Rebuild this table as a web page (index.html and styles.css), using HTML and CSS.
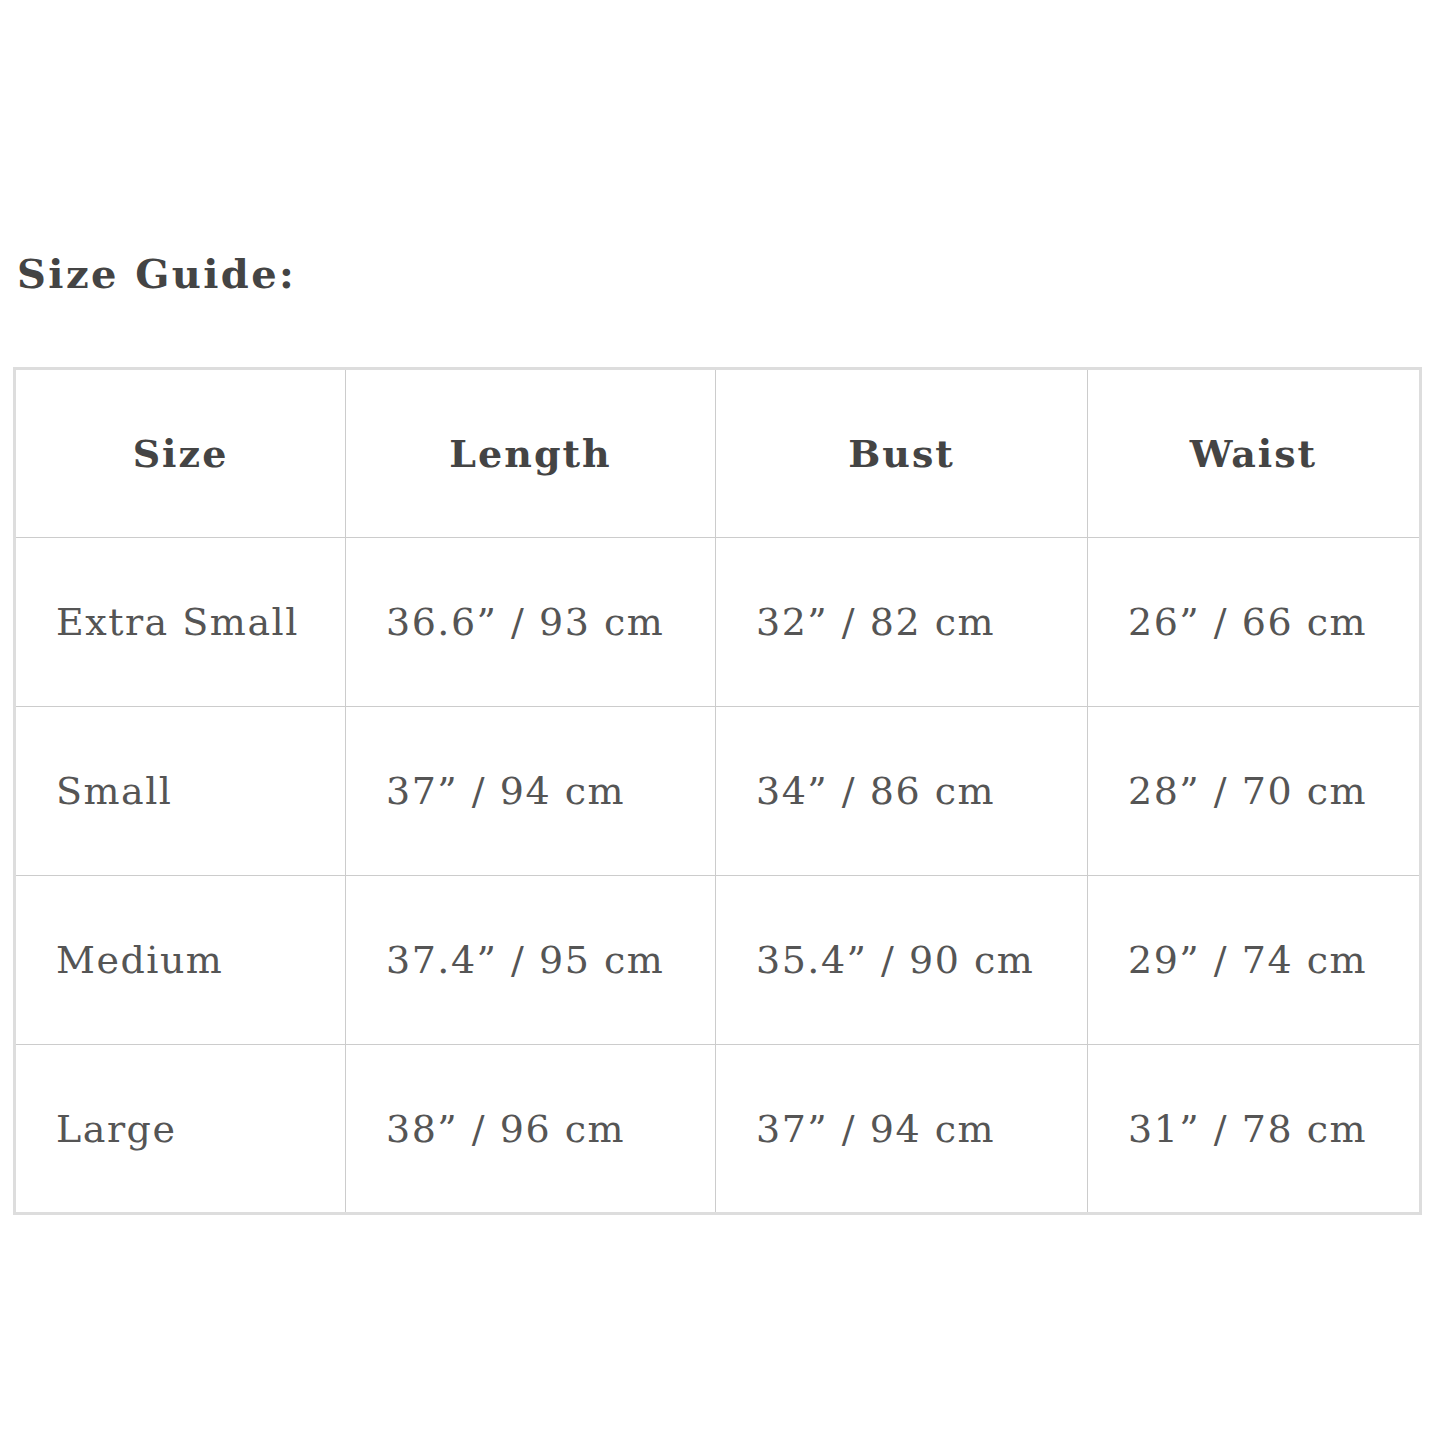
FILE: index.html
```html
<!DOCTYPE html>
<html>
<head>
<meta charset="utf-8">
<link rel="stylesheet" href="styles.css">
</head>
<body>
<div class="page">
  <h2 class="title">Size Guide:</h2>
  <table class="guide">
    <colgroup>
      <col class="c1"><col class="c2"><col class="c3"><col class="c4">
    </colgroup>
    <thead>
      <tr><th>Size</th><th>Length</th><th>Bust</th><th>Waist</th></tr>
    </thead>
    <tbody>
      <tr><td>Extra Small</td><td>36.6” / 93 cm</td><td>32” / 82 cm</td><td>26” / 66 cm</td></tr>
      <tr><td>Small</td><td>37” / 94 cm</td><td>34” / 86 cm</td><td>28” / 70 cm</td></tr>
      <tr><td>Medium</td><td>37.4” / 95 cm</td><td>35.4” / 90 cm</td><td>29” / 74 cm</td></tr>
      <tr><td>Large</td><td>38” / 96 cm</td><td>37” / 94 cm</td><td>31” / 78 cm</td></tr>
    </tbody>
  </table>
</div>
</body>
</html>
```
FILE: styles.css
```css
html, body { margin: 0; padding: 0; background: #fff; }
.page {
  padding: 246px 0 0 13px;
  font-family: "DejaVu Serif", "Liberation Serif", serif;
}
.title {
  margin: 0 0 65px 4px;
  font-size: 40px;
  line-height: 56px;
  font-weight: bold;
  color: #444;
  letter-spacing: 2.4px;
}
.guide {
  border-collapse: collapse;
  table-layout: fixed;
  width: 1406px;
  border: 3px solid #ddd;
}
.c1 { width: 331px; }
.c2 { width: 370px; }
.c3 { width: 372px; }
.c4 { width: 333px; }
.guide th, .guide td {
  border: 1px solid #ccc;
  height: 169px;
  padding: 0 0 0 40px;
  box-sizing: border-box;
  font-size: 38px;
  color: #555;
  letter-spacing: 1.5px;
  white-space: nowrap;
  vertical-align: middle;
}
.guide th {
  padding: 0;
  text-align: center;
  font-weight: bold;
  color: #444;
  letter-spacing: 2px;
}
.guide td { text-align: left; font-weight: normal; }
```
